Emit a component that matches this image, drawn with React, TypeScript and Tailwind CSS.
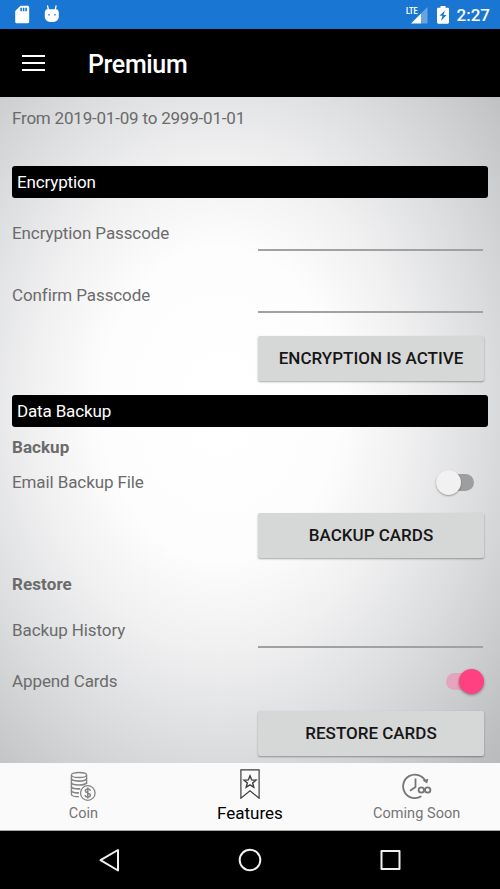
import type { ReactNode } from 'react'

function StatusBar() {
  return (
    <div className="flex h-[29px] shrink-0 items-center justify-between bg-[#1976d2] pr-[10px] pl-[14px] text-white">
      <div className="flex items-center gap-[14px]">
        <svg className="h-[19px] w-4" viewBox="0 0 16 19">
          <path
            fill="currentColor"
            fillRule="evenodd"
            d="M6.500.700h7.200a1.500 1.500 0 0 1 1.500 1.500v14.600a1.500 1.500 0 0 1-1.500 1.500H2.700a1.500 1.500 0 0 1-1.500-1.500V6zM6.300 2.800v3.400h1.600V2.800zm2.500 0v3.400h1.600V2.800zm2.500 0v3.400h1.600V2.800z"
          />
        </svg>
        <svg className="h-[19px] w-4" viewBox="0 0 16 19">
          <path stroke="currentColor" strokeWidth="1.300" strokeLinecap="round" d="m3.600 1 .8 4M12 1l-.8 4" />
          <path
            fill="currentColor"
            fillRule="evenodd"
            d="M3.500 4.200h8.600c1.800 0 2.700 1.400 2.700 4v3.300c0 3.700-2.800 5.500-7 5.500s-7-1.800-7-5.500V8.200c0-2.600.9-4 2.700-4zM5 8.900a.8.800 0 1 0 0 1.700.8.800 0 1 0 0-1.700zm6 0a.8.800 0 1 0 0 1.700.8.800 0 1 0 0-1.700z"
          />
        </svg>
      </div>
      <div className="flex items-center">
        <div className="flex">
          <span className="w-[11px] text-[9px] leading-[10px] font-bold">
            <span className="-ml-px inline-block origin-left scale-x-[0.8]">LTE</span>
          </span>
          <svg className="-ml-[7px] h-[18px] w-[17px]" viewBox="0 0 17 18">
            <path fill="#fff" fillOpacity=".35" d="M16.500 1v16.500H10V7.500z" />
            <path fill="#fff" d="M0 17.500 10 7.500v10z" />
          </svg>
        </div>
        <svg className="ml-[9px] h-[18px] w-3" viewBox="0 0 12 18">
          <path
            fill="currentColor"
            fillRule="evenodd"
            d="M3.500 0h5v1.700h2.300c.6 0 1.200.5 1.200 1.200v13.600c0 .7-.6 1.200-1.200 1.200H1.200C.6 17.700 0 17.200 0 16.500V2.900c0-.7.6-1.200 1.200-1.200h2.300zM8 4.500 2.500 9.800h3L4 15l5.500-6h-3z"
          />
        </svg>
        <span className="mt-[2px] ml-[8px] text-[17px] leading-none font-medium">2:27</span>
      </div>
    </div>
  )
}

function AppBar({ title }: { title: string }) {
  return (
    <header className="flex h-[68px] shrink-0 items-center bg-black pl-[22px] text-white">
      <button type="button" aria-label="Menu" className="flex w-[23px] flex-col gap-[5px]">
        <span className="h-[2px] bg-white" />
        <span className="h-[2px] bg-white" />
        <span className="h-[2px] bg-white" />
      </button>
      <h1 className="mt-[3px] ml-[43px] text-[25px] leading-none font-medium tracking-[-0.35px]">{title}</h1>
    </header>
  )
}

function SectionHeader({ children }: { children: ReactNode }) {
  return (
    <h2 className="flex h-[32px] shrink-0 items-center rounded-[3px] bg-black px-[5px] pt-px text-[17px] tracking-[-0.15px] text-white">
      {children}
    </h2>
  )
}

function InputRow({ label, className }: { label: string; className: string }) {
  return (
    <label className={`flex shrink-0 items-center justify-between ${className}`}>
      {label}
      <input className="mr-[5px] h-8 w-[225px] self-end border-b-2 border-[#a0a2a2] bg-transparent outline-none" />
    </label>
  )
}

function ActionButton({ children, className }: { children: ReactNode; className: string }) {
  return (
    <button
      type="button"
      className={`mr-[4px] h-[45px] w-[226px] shrink-0 self-end rounded-[2px] bg-[#d6d8d7] pt-px text-[17px] font-medium text-[#161616] shadow-[0_1px_2px_rgba(0,0,0,0.35)] ${className}`}
    >
      {children}
    </button>
  )
}

function Switch({ on = false }: { on?: boolean }) {
  return on ? (
    <span className="mr-[4px] flex h-[17px] w-[38px] items-center justify-end rounded-full bg-[#e3a5bd]">
      <span className="size-[25px] shrink-0 rounded-full bg-[#ff4081] shadow-[0_1px_3px_rgba(0,0,0,0.4)]" />
    </span>
  ) : (
    <span className="mr-[14px] flex h-[17px] w-[38px] items-center rounded-full bg-[#9e9e9e]">
      <span className="size-[25px] shrink-0 rounded-full bg-[#f1f1f1] shadow-[0_1px_2px_rgba(0,0,0,0.35)]" />
    </span>
  )
}

function CoinIcon() {
  return (
    <svg className="h-[30px] w-[26px]" viewBox="0 0 26 30" fill="none" stroke="#858585" strokeWidth="1.300">
      <ellipse cx="9" cy="4" rx="7.600" ry="2.500" />
      <path d="M1.400 4v19.200c0 1.400 3 2.500 7.600 2.500M16.600 4v9" />
      <path
        strokeWidth="1.700"
        d="M1.400 7.600c0 3.300 15.200 3.300 15.200 0M1.400 11.500c0 3.300 15.200 3.300 15.200 0M1.400 15.400c0 2 4 2.700 8.800 2.400M1.400 19.400c0 2 4 2.700 7.500 2.400"
      />
      <circle cx="17.800" cy="22" r="7.300" fill="#fafafa" />
      <path
        strokeWidth="1.500"
        d="M20.300 19.700c0-1.200-1-1.800-2.500-1.800s-2.500.7-2.500 1.900c0 2.800 5.100 1.500 5.100 4.300 0 1.300-1.100 2-2.600 2s-2.600-.7-2.600-2M17.800 16.500v11"
      />
    </svg>
  )
}

function FeaturesIcon() {
  return (
    <svg className="h-[30px] w-5" viewBox="0 0 20 30" fill="none" stroke="#3c3c3c" strokeWidth="1.200">
      <path d="M.9.900h18.200v28.300L10 21.800.9 29.200z" />
      <path strokeWidth="1.400" d="m10 6.800 1.700 4.100 4.300.3-3.300 2.800 1.100 4.300-3.800-2.400-3.800 2.400 1.100-4.300L4 11.200l4.300-.3z" />
    </svg>
  )
}

function SoonIcon() {
  return (
    <svg className="h-[30px] w-[30px]" viewBox="0 0 30 30" fill="none" stroke="#757575" strokeWidth="1.800">
      <path d="M19.300 25.300A11.800 11.800 0 1 1 23.300 9.800" />
      <path d="M13.500 7.500V16l-5.500 3.700" />
      <path fill="#757575" stroke="none" d="m20.600 9.500 5.700-1.700-1.200 4.800z" />
      <circle cx="19.300" cy="19" r="2.700" />
      <circle cx="25.700" cy="19" r="2.700" />
    </svg>
  )
}

function TabBar() {
  return (
    <nav className="grid h-[68px] shrink-0 grid-cols-3 border-b border-[#a5a5a5] bg-[#fafafa] text-[14.500px] text-[#757575]">
      <a className="flex flex-col items-center pt-[8px]">
        <CoinIcon />
        <span className="mt-[3px] leading-5">Coin</span>
      </a>
      <a className="flex flex-col items-center pt-[6px] text-[17px] text-black">
        <FeaturesIcon />
        <span className="mt-[4px] leading-5">Features</span>
      </a>
      <a className="flex flex-col items-center pt-[8px]">
        <SoonIcon />
        <span className="mt-[3px] leading-5 tracking-[0.05px]">Coming Soon</span>
      </a>
    </nav>
  )
}

function SystemNav() {
  return (
    <div className="flex h-[58px] shrink-0 items-center justify-between bg-black px-[98px]">
      <svg className="size-6" viewBox="0 0 24 24" fill="none" stroke="#f0f0f0" strokeWidth="2" strokeLinejoin="round">
        <path d="M20 2v20.500L2.500 12.200z" />
      </svg>
      <svg className="size-6" viewBox="0 0 24 24" fill="none" stroke="#f0f0f0" strokeWidth="2">
        <circle cx="12" cy="12" r="10.300" />
      </svg>
      <svg className="size-6" viewBox="0 0 24 24" fill="none" stroke="#f0f0f0" strokeWidth="2" strokeLinejoin="round">
        <path d="M3.500 3h18v18h-18z" />
      </svg>
    </div>
  )
}

export default function App() {
  return (
    <div className="flex h-[889px] w-[500px] flex-col overflow-hidden font-[Roboto,sans-serif]">
      <StatusBar />
      <AppBar title="Premium" />
      <main className="flex h-[666px] shrink-0 flex-col overflow-hidden bg-[radial-gradient(ellipse_440px_570px_at_44%_46%,#ffffff_0%,#fdfdfd_27%,#f0f0f1_43%,#dfe0e2_58%,#d2d3d5_69%,#bebfc1_85%,#b2b3b5_100%)] px-[12px] text-[17px] tracking-[-0.1px] text-[#6b6b6b]">
        <p className="flex h-[42px] shrink-0 items-center pt-[2px] tracking-[-0.2px]">From 2019-01-09 to 2999-01-01</p>

        <div className="mt-[27px] flex flex-col">
          <SectionHeader>Encryption</SectionHeader>
          <InputRow label="Encryption Passcode" className="mt-[5px] h-[62px] [&>input]:mb-[14px]" />
          <InputRow label="Confirm Passcode" className="h-[62px] [&>input]:mb-[14px]" />
          <ActionButton className="mt-[9px] tracking-normal">ENCRYPTION IS ACTIVE</ActionButton>
        </div>

        <div className="mt-[14px] flex flex-col">
          <SectionHeader>Data Backup</SectionHeader>
          <h3 className="flex h-[40px] items-center pt-[2px] font-bold tracking-[0.05px]">Backup</h3>
          <div className="flex h-[30px] items-center justify-between">
            <span className="pt-[2px]">Email Backup File</span>
            <Switch />
          </div>
          <ActionButton className="mt-[16px] tracking-normal">BACKUP CARDS</ActionButton>
          <h3 className="mt-[10px] flex h-8 items-center pt-[2px] font-bold tracking-[0.1px]">Restore</h3>
          <InputRow label="Backup History" className="h-[60px] pt-[2px] [&>input]:mb-[12px]" />
          <div className="flex h-[42px] items-center justify-between">
            <span className="pt-[2px]">Append Cards</span>
            <Switch on />
          </div>
          <ActionButton className="mt-[9px] tracking-normal">RESTORE CARDS</ActionButton>
        </div>
      </main>
      <TabBar />
      <SystemNav />
    </div>
  )
}
